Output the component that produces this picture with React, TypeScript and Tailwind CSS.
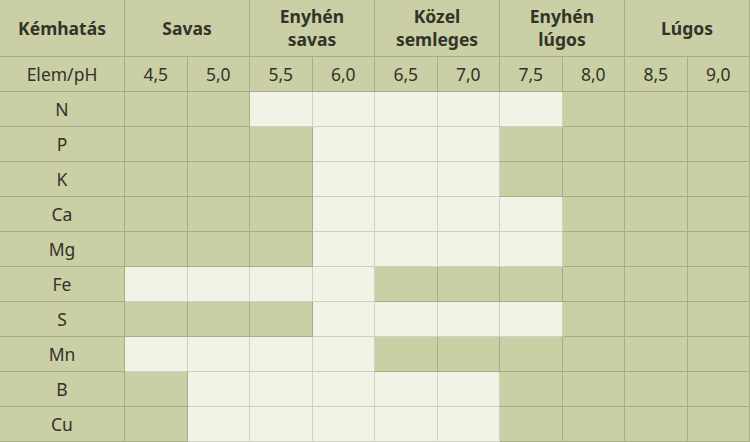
import React from 'react';

const groups = ['Savas', 'Enyhén savas', 'Közel semleges', 'Enyhén lúgos', 'Lúgos'];
const phs = ['4,5', '5,0', '5,5', '6,0', '6,5', '7,0', '7,5', '8,0', '8,5', '9,0'];

// [element, first light column, last light column] (1-based pH columns)
const rows: [string, number, number][] = [
  ['N', 3, 7],
  ['P', 4, 6],
  ['K', 4, 6],
  ['Ca', 4, 7],
  ['Mg', 4, 7],
  ['Fe', 1, 4],
  ['S', 4, 7],
  ['Mn', 1, 4],
  ['B', 2, 6],
  ['Cu', 2, 6],
];

const green = 'bg-[#cbcfa5] border-[#a9ad86]';
const light = 'bg-[#f2f2e7] border-[#d0d0c5]';

export default function App() {
  return (
    <div
      className="w-[750px] h-[442px] overflow-hidden bg-[#cbcfa5] text-[#323329]"
      style={{ fontFamily: '"Noto Sans", "Open Sans", sans-serif' }}
    >
      <div className="grid grid-cols-[125px_repeat(10,1fr)] grid-rows-[57px_35px_repeat(10,35px)]">
        <div className={`flex items-center justify-center border-r border-b font-bold text-[17.5px] ${green}`}>
          Kémhatás
        </div>
        {groups.map(g => (
          <div
            key={g}
            className={`col-span-2 flex items-center justify-center border-r border-b px-2 text-center font-bold text-[17.5px] leading-[23px] ${green}`}
          >
            {g.split(' ').length > 1 ? (
              <span>
                {g.split(' ')[0]}
                <br />
                {g.split(' ')[1]}
              </span>
            ) : (
              g
            )}
          </div>
        ))}

        <div className={`flex items-center justify-center border-r border-b text-[17.5px] ${green}`}>Elem/pH</div>
        {phs.map(p => (
          <div key={p} className={`flex items-center justify-center border-r border-b text-[17.5px] ${green}`}>
            {p}
          </div>
        ))}

        {rows.map(([el, from, to]) => (
          <React.Fragment key={el}>
            <div className={`flex items-center justify-center border-r border-b pt-px text-[17.5px] ${green}`}>{el}</div>
            {phs.map((p, i) => {
              const on = i + 1 >= from && i + 1 <= to;
              return <div key={p} className={`border-r border-b ${on ? light : green}`} />;
            })}
          </React.Fragment>
        ))}
      </div>
    </div>
  );
}
